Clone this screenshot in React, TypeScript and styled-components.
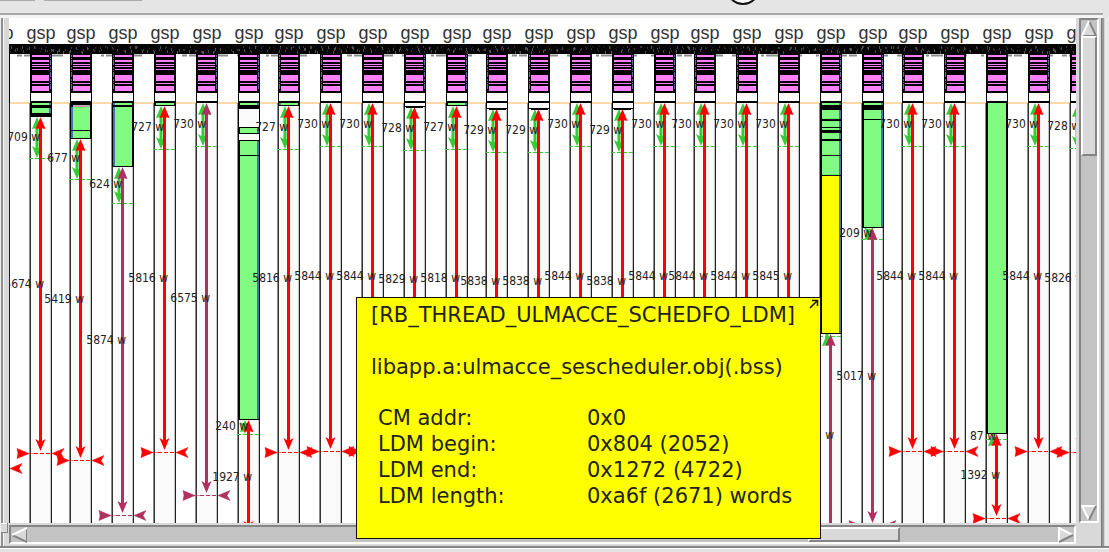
import React from "react";
import styled, { createGlobalStyle } from "styled-components";

const GlobalStyle = createGlobalStyle`
  * { box-sizing: border-box; }
  body { margin: 0; background: #e5e5e5; font-family: "DejaVu Sans", sans-serif; color: #222; }
`;

type Seg = [number, number, string];
interface Column {
  x: number;
  edge?: "l" | "r";
  segs?: Seg[];
  start: number;
  dash?: number;
  end: number;
  short?: string;
  long?: string;
  warn?: boolean;
}

const G = "#80fa80";
const K = "#000";
const W = "#fafafa";
const Y = "#ffff00";
const RED = "#ff0000";
const PLUM = "#b03060";
const LIME = "#32cd32";

const thinGreen: Seg[] = [[103, 105, G], [105, 106, K]];
const gapLow: Seg[] = [[103, 108, W], [108, 110, K]];

const columns: Column[] = [
  { x: -12, start: 103, end: 466 },
  { x: 30, edge: "r", segs: [[103, 105, G], [105, 108, K], [108, 113, G], [113, 117, K]], start: 117, dash: 158, end: 451, short: "709 w", long: "5674 w" },
  { x: 70, edge: "l", segs: [[103, 105, K], [105, 107, "#b8a8a8"], [107, 130, G], [130, 131, K], [131, 138, G], [138, 139, K]], start: 139, dash: 179, end: 458, short: "677 w", long: "5419 w" },
  { x: 112, edge: "l", segs: [[103, 105, G], [105, 107, K], [107, 166, G], [166, 167, K]], start: 167, dash: 203, end: 513, short: "624 w", long: "5874 w", warn: true },
  { x: 154, segs: thinGreen, start: 106, dash: 149, end: 450, short: "727 w", long: "5816 w" },
  { x: 196, edge: "r", start: 103, dash: 146, end: 493, short: "730 w", long: "6575 w", warn: true },
  { x: 238, edge: "r", segs: [[103, 105, G], [105, 109, K], [109, 127, W], [127, 128, K], [128, 133, G], [133, 134, K], [134, 140, W], [140, 141, K], [141, 155, G], [155, 156, K], [156, 419, G], [419, 420, K]], start: 420, dash: 434, end: 533, short: "240 w", long: "1927 w" },
  { x: 278, edge: "l", segs: thinGreen, start: 106, dash: 149, end: 450, short: "727 w", long: "5816 w" },
  { x: 320, edge: "l", start: 103, dash: 146, end: 449, short: "730 w", long: "5844 w" },
  { x: 362, start: 103, dash: 146, end: 449, short: "730 w", long: "5844 w" },
  { x: 404, edge: "r", segs: [[103, 106, W], [106, 108, K]], start: 107, dash: 150, end: 451, short: "728 w", long: "5829 w" },
  { x: 446, edge: "r", segs: thinGreen, start: 106, dash: 149, end: 450, short: "727 w", long: "5818 w" },
  { x: 486, edge: "l", segs: gapLow, start: 109, dash: 152, end: 453, short: "729 w", long: "5838 w" },
  { x: 528, edge: "l", segs: gapLow, start: 109, dash: 152, end: 453, short: "729 w", long: "5838 w" },
  { x: 570, start: 103, dash: 146, end: 449, short: "730 w", long: "5844 w" },
  { x: 612, edge: "r", segs: gapLow, start: 109, dash: 152, end: 453, short: "729 w", long: "5838 w" },
  { x: 654, edge: "r", start: 103, dash: 146, end: 449, short: "730 w", long: "5844 w" },
  { x: 694, edge: "l", start: 103, dash: 146, end: 449, short: "730 w", long: "5844 w" },
  { x: 736, edge: "l", start: 103, dash: 146, end: 449, short: "730 w", long: "5844 w" },
  { x: 778, start: 103, dash: 146, end: 449, short: "730 w", long: "5845 w" },
  { x: 820, edge: "r", segs: [[103, 105, G], [105, 110, K], [110, 119, G], [119, 121, K], [121, 127, G], [127, 128, K], [128, 130, G], [130, 133, K], [133, 139, G], [139, 141, K], [141, 155, G], [155, 156, K], [156, 175, G], [175, 176, K], [176, 333, Y], [333, 334, K]], start: 334, dash: 336, end: 535, long: "w", warn: true },
  { x: 862, edge: "r", segs: [[103, 105, G], [105, 110, K], [110, 119, G], [119, 120, K], [120, 227, G], [227, 228, K]], start: 228, dash: 239, end: 523, short: "209 w", long: "5017 w", warn: true },
  { x: 902, edge: "l", start: 103, dash: 146, end: 449, short: "730 w", long: "5844 w" },
  { x: 944, edge: "l", start: 103, dash: 146, end: 449, short: "730 w", long: "5844 w" },
  { x: 986, segs: [[103, 433, G], [433, 434, K]], start: 434, dash: 439, end: 516, short: "87 w", long: "1392 w" },
  { x: 1028, edge: "r", start: 103, dash: 146, end: 449, short: "730 w", long: "5844 w" },
  { x: 1070, start: 105, dash: 148, end: 450, short: "728 w", long: "5826 w" },
];

const pinkBands: [number, number][] = [
  [55, 2], [60, 2], [64, 1], [66, 1], [69, 1], [75, 6], [83, 1], [86, 5],
];

const noise = Array.from({ length: 640 }, (_, i) => {
  const r = Math.abs(Math.sin(i * 12.9898) * 43758.5453) % 1;
  const s = Math.abs(Math.sin(i * 78.233) * 12543.123) % 1;
  return { x: 9 + i * 2 - (i % 3), y: 46 + Math.floor(r * 6), h: 1 + Math.floor(s * 3), o: 0.08 + s * 0.25 };
});

const Page = styled.main`
  display: flex;
  flex-direction: column;
  min-height: 100vh;
  overflow: hidden;
  position: relative;
`;

const Toolbar = styled.header`
  height: 18px;
  margin-right: 6px;
  background: #e5e5e5;
  overflow: hidden;
`;

const ToolbarArt = styled.svg`
  display: block;
  width: 100%;
  height: 18px;
`;

const Workspace = styled.section`
  display: flex;
  flex: 1;
  min-height: 0;
`;

const LeftGutter = styled.div`
  display: flex;
  flex-direction: column;
  justify-content: flex-end;
  width: 9px;
  padding-bottom: 13px;
  border-left: 1px solid #eee;
  background: linear-gradient(90deg, #909090 0 2px, #f4f4f4 2px 3px, #d8d8d8 3px);
`;

const Sash = styled.div`
  width: 7px;
  height: 10px;
  background: #d9d9d9;
  border: solid #858585;
  border-width: 0 1px 1px 0;
  box-shadow: inset 0 1px #fff;
`;

const Viewport = styled.div`
  flex: 1;
  min-width: 0;
  display: grid;
  grid-template: minmax(0, 1fr) 23px / minmax(0, 1fr) 25px;
  background: #d9d9d9;
`;

const Canvas = styled.div`
  background: #fff;
  overflow: hidden;
`;

const Chart = styled.svg`
  display: block;
  width: 100%;
  height: 505px;
`;

const ScrollBar = styled.div<{ $vertical?: boolean }>`
  display: flex;
  flex-direction: ${(p) => (p.$vertical ? "column" : "row")};
  justify-content: space-between;
  background: #c3c3c3;
  border: 2px solid;
  border-color: #858585 #fff #fff #858585;
  margin: ${(p) => (p.$vertical ? "0 2px 0 3px" : "2px 0 2px 0")};
`;

const Thumb = styled.div<{ $vertical?: boolean }>`
  background: #d9d9d9;
  border: 2px solid;
  border-color: #fff #858585 #858585 #fff;
  ${(p) => (p.$vertical ? "height: 120px; margin-bottom: auto;" : "width: 92px; margin-left: auto; margin-right: 158px;")}
`;

const StepButton = styled.button`
  display: block;
  padding: 0;
  border: 0;
  background: transparent;
  line-height: 0;
  flex: none;
`;

const RightFrame = styled.div`
  width: 8px;
  background: linear-gradient(90deg, #777 0 1px, #999 1px 3px, #d4d4d4 3px 4px, #e9e9e9 4px);
`;

const Footer = styled.footer`
  height: 6px;
  background: linear-gradient(#858585 0 2px, #fff 2px 3px, #e2e2e2 3px);
`;

const Tip = styled.aside`
  position: absolute;
  left: 356px;
  top: 297px;
  width: 465px;
  height: 242px;
  padding: 4px 14px;
  border: 1px solid #111;
  background: #ff0;
  font-size: 21px;
  line-height: 26px;
  white-space: nowrap;
`;

const TipTitle = styled.h1`
  margin: 0 0 26px;
  font: inherit;
`;

const TipFile = styled.p`
  margin: 0 0 25px;
`;

const Facts = styled.dl`
  display: grid;
  grid-template-columns: 209px 1fr;
  margin: 0 7px;
`;

const Term = styled.dt``;

const Value = styled.dd`
  margin: 0;
`;

const TipArrow = styled.svg`
  position: absolute;
  right: 1px;
  top: 1px;
`;

function upHead(x: number, y: number) {
  return `M${x} ${y} L${x + 5} ${y + 12} L${x} ${y + 11} L${x - 5} ${y + 12}Z`;
}
function downHead(x: number, y: number) {
  return `M${x} ${y} L${x + 5} ${y - 12} L${x} ${y - 9} L${x - 5} ${y - 12}Z`;
}

function ColumnGlyph({ c }: { c: Column }) {
  const { x } = c;
  const color = c.warn ? PLUM : RED;
  const fillX = c.edge === "l" ? x + 3 : x + 2;
  const fillW = 17;
  const ax = x + 10.5;
  const gx = x + 7;
  const hy = c.end + 2;
  return (
    <g>
      <rect x={x} y={54} width={22} height={469} fill={W} />
      <rect x={x - 1} y={103} width={1} height={420} fill="#8a8a8a" />
      <rect x={x} y={103} width={1} height={420} fill="#333" />
      <rect x={x + 21} y={54} width={1} height={469} fill="#222" />
      <rect x={x + 20} y={103} width={1} height={420} fill="#c4c4c4" />
      {c.dash !== undefined && (
        <>
          <path d={`M${gx} ${c.start + 4}V${c.dash - 4}`} stroke={LIME} strokeWidth={3} />
          <path d={upHead(gx, c.start)} fill={LIME} />
          <path d={downHead(gx, c.dash)} fill={LIME} />
          <path d={`M${x - 1} ${c.dash + 0.5}h22`} stroke={LIME} strokeDasharray="4 2" />
        </>
      )}
      <path d={`M${ax} ${c.start + 6}V${c.end - 6}`} stroke={color} strokeWidth={3} />
      <path d={upHead(ax, c.start)} fill={color} />
      <path d={downHead(ax, c.end)} fill={color} />
      {c.segs && <rect x={x} y={103} width={22} height={c.start - 103} fill={K} />}
      {c.segs?.map(([a, b, f], i) => (
        <g key={i}>
          <rect x={f === W ? x + 1 : fillX} y={a} width={f === W ? 20 : fillW + (c.edge ? 0 : 1)} height={b - a} fill={f} />
          {c.edge && (f === G || f === Y) && (
            <rect x={c.edge === "l" ? x + 1 : x + 19} y={a} width={2} height={b - a} fill="#4a72a8" />
          )}
        </g>
      ))}
      <rect x={x} y={54} width={22} height={39} fill={K} />
      {pinkBands.map(([y, h]) => (
        <rect key={y} x={fillX} y={y} width={fillW + (c.edge ? 0 : 1)} height={h} fill="#ff80ff" />
      ))}
      {c.edge && (
        <path d={`M${c.edge === "l" ? x + 1.5 : x + 20.5} 55V91`} stroke="#4a72a8" strokeDasharray="2 1 1 1 5 2" />
      )}
      <rect x={x} y={93} width={22} height={10} fill={K} />
      <rect x={x + 1} y={93} width={20} height={8} fill={W} />
      <path d={`M${x + 4} ${hy + 0.5}h18`} stroke={color} strokeDasharray="4 2" />
      <path d={`M${x - 1} ${hy + 0.5} l-12 -5 l1 5 l-1 5Z M${x + 22} ${hy + 0.5} l12 -5 l-3 5 l3 5Z M${x - 2} ${hy + 0.5}h6`} fill={color} stroke={color} strokeWidth={0.5} />
    </g>
  );
}

function MemoryChart() {
  return (
    <Chart role="img" aria-label="Memory map">
      <g transform="translate(-9 -18)">
        <path d="M9 103H1600" stroke="#fdb64c" strokeWidth={1} />
        <path d="M17 55.5H1600" stroke="#8c8c8c" strokeWidth={2} strokeDasharray="5 2 8 14 3 2 12 9" />
        {columns.map((c) => <ColumnGlyph key={c.x} c={c} />)}
        <rect x={9} y={44} width={1591} height={10} fill="#050505" />
        {noise.map((n, i) => (
          <rect key={i} x={n.x} y={n.y} width={1} height={n.h} fill="#fff" opacity={n.o} />
        ))}
        {columns.map((c) => (
          <g key={c.x} fill="#222">
            <text x={c.x + 11} y={39} textAnchor="middle" fontFamily="Liberation Sans, sans-serif" fontSize={18} fill="#333">gsp</text>
            <g fontFamily="DejaVu Sans Condensed, DejaVu Sans, sans-serif" fontSize={12} textAnchor="end">
              {c.short && <text x={c.x + 10} y={Math.round((c.start + (c.dash ?? 0)) / 2) + 3}>{c.short}</text>}
              {c.long && <text x={c.x + 14} y={Math.round((c.start + c.end) / 2) + 4}>{c.long}</text>}
            </g>
          </g>
        ))}
      </g>
    </Chart>
  );
}

function Step({ dir }: { dir: "up" | "down" | "left" | "right" }) {
  const shape = {
    up: ["M8 1L1 16", "M1 16H15L8 1"],
    down: ["M15 1L8 15", "M8 15L1 1H15"],
    left: ["M1 8L16 1", "M16 1V15L1 8"],
    right: ["M1 15L15 8", "M15 8L1 1V15"],
  }[dir];
  const light = dir === "down" || dir === "right";
  return (
    <StepButton aria-label={`Scroll ${dir}`}>
      <svg width="16" height="16">
        <path d={shape[1]} fill="#d9d9d9" stroke={light ? "#fff" : "#858585"} strokeWidth={2} />
        <path d={shape[0]} stroke={light ? "#858585" : "#fff"} strokeWidth={2} />
      </svg>
    </StepButton>
  );
}

export default function App() {
  return (
    <>
      <GlobalStyle />
      <Page>
        <Toolbar>
          <ToolbarArt>
            <path d="M0 0.5H35M44 0.5H142" stroke="#aaa" />
            <circle cx="743" cy="-12" r="16" fill="#fff" stroke="#111" strokeWidth="2" />
            <path d="M0 14H1600" stroke="#a8a8a8" strokeWidth="2" />
            <path d="M0 16.500H1600" stroke="#f4f4f4" strokeWidth="3" />
          </ToolbarArt>
        </Toolbar>
        <Workspace>
          <LeftGutter><Sash /></LeftGutter>
          <Viewport>
            <Canvas><MemoryChart /></Canvas>
            <ScrollBar $vertical>
              <Step dir="up" />
              <Thumb $vertical />
              <Step dir="down" />
            </ScrollBar>
            <ScrollBar>
              <Step dir="left" />
              <Thumb />
              <Step dir="right" />
            </ScrollBar>
          </Viewport>
          <RightFrame />
        </Workspace>
        <Footer />
        <Tip>
          <TipTitle>[RB_THREAD_ULMACCE_SCHEDFO_LDM]</TipTitle>
          <TipFile>libapp.a:ulmacce_sescheduler.obj(.bss)</TipFile>
          <Facts>
            <Term>CM addr:</Term><Value>0x0</Value>
            <Term>LDM begin:</Term><Value>0x804 (2052)</Value>
            <Term>LDM end:</Term><Value>0x1272 (4722)</Value>
            <Term>LDM length:</Term><Value>0xa6f (2671) words</Value>
          </Facts>
          <TipArrow width="10" height="10">
            <path d="M1 9L8 2M3 1.5H8.500V7" fill="none" stroke="#111" strokeWidth="1.500" />
          </TipArrow>
        </Tip>
      </Page>
    </>
  );
}
